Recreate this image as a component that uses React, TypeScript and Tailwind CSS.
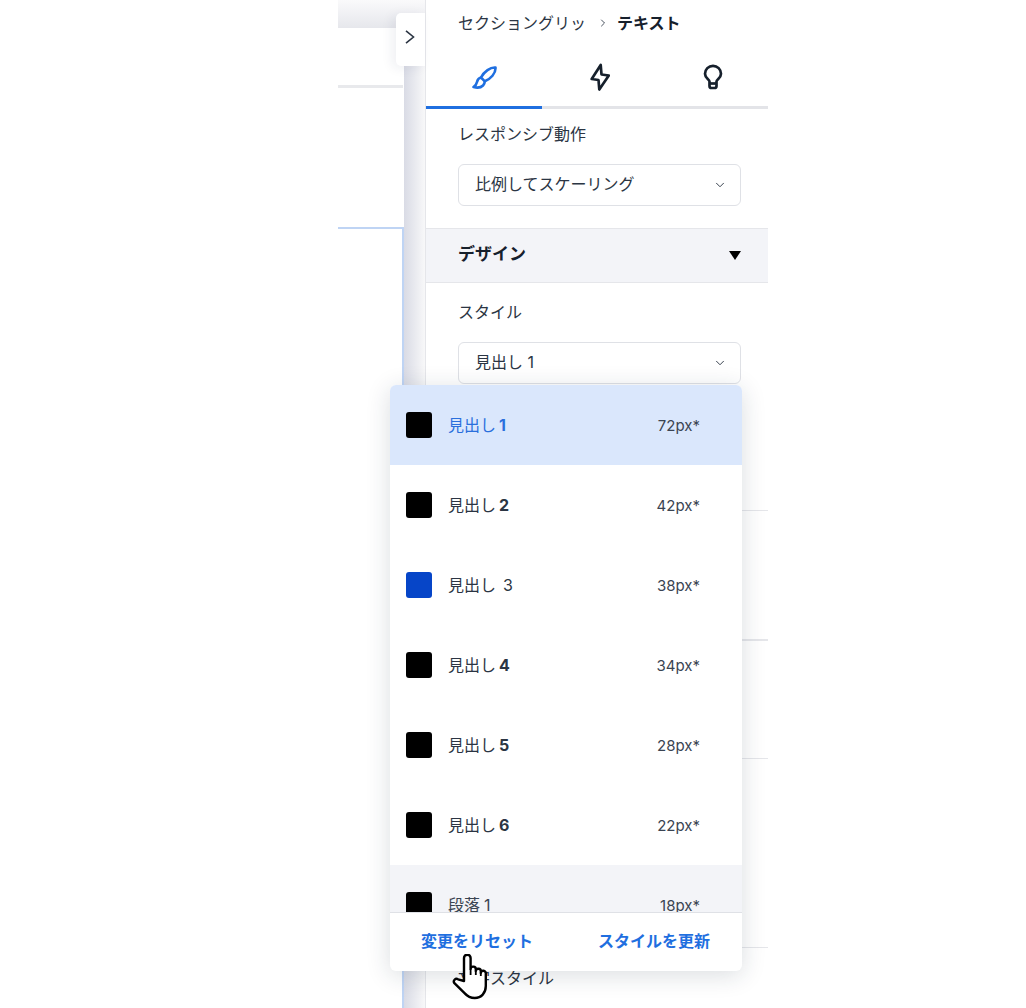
import React from "react";
import { ChevronDown, ChevronRight } from "lucide-react";

const font = "font-['Inter','Noto_Sans_CJK_JP',sans-serif]";

const styles = [
  { name: "見出し", num: "1", size: "72px*", color: "bg-black", active: true, numClass: "ml-[3px] font-bold" },
  { name: "見出し", num: "2", size: "42px*", color: "bg-black", numClass: "ml-[3px] font-bold" },
  { name: "見出し", num: "3", size: "38px*", color: "bg-[#0645c8]", numClass: "ml-[7px]" },
  { name: "見出し", num: "4", size: "34px*", color: "bg-black", numClass: "ml-[3px] font-bold" },
  { name: "見出し", num: "5", size: "28px*", color: "bg-black", numClass: "ml-[3px] font-bold" },
  { name: "見出し", num: "6", size: "22px*", color: "bg-black", numClass: "ml-[3px] font-bold" },
  { name: "段落", num: "1", size: "18px*", color: "bg-black", hover: true, numClass: "ml-[4px]" },
];

const Select = ({ value }: { value: string }) => (
  <div className="flex h-[42px] w-[283px] items-center justify-between rounded-[6px] border border-[#dfe1e6] bg-white pl-[16px] pr-[13px] text-[16px] text-[#2b3543]">
    <span className="pb-[2px]">{value}</span>
    <ChevronDown className="h-[14px] w-[14px] text-[#2b3543]" strokeWidth={1.6} />
  </div>
);

const StyleRow = ({ item }: { item: (typeof styles)[number] }) => (
  <div
    className={`flex h-[80px] shrink-0 items-center pl-[16px] pr-[42px] text-[16px] ${
      item.active ? "bg-[#dae7fc] text-[#2a6fdc]" : item.hover ? "bg-[#f3f4f8] text-[#3a4452]" : "text-[#2b3543]"
    }`}
  >
    <div className={`h-[26px] w-[26px] rounded-[3px] ${item.color}`} />
    <span className="ml-[16px] whitespace-pre">
      {item.name}
      <span className={item.numClass}>{item.num}</span>
    </span>
    <span className="ml-auto pt-[2px] text-[15px] text-[#3a4452]">{item.size}</span>
  </div>
);

const BrushIcon = () => (
  <svg viewBox="0 0 25 25" className="h-[25px] w-[25px]" fill="none" stroke="#1f6fe0" strokeWidth="2.6" strokeLinejoin="round">
    <path d="M23.5 2.500C18.500 2 12 6.500 9 12.500L12.800 16.300C18.500 14 24 8.500 23.500 2.500Z" />
    <path d="M9 12.500C6.500 13 5.500 15 5 17C4.500 19.500 3 21 1.500 22C5 23 9 22.500 11 20.500C12.200 19.200 12.800 17.800 12.800 16.300" />
  </svg>
);

const BoltIcon = () => (
  <svg viewBox="0 0 20 28" className="h-[28px] w-[20px]" fill="none" stroke="#16202c" strokeWidth="2.700" strokeLinejoin="round">
    <path d="M10.700 2L11.500 11.500L18.800 12.500L9.300 26.500L8.500 17L1.700 16Z" />
  </svg>
);

const BulbIcon = () => (
  <svg viewBox="0 0 20 26" className="h-[26px] w-[20px]" fill="none" stroke="#16202c" strokeWidth="2.700" strokeLinejoin="round">
    <path d="M6.500 17.500C6.500 15.500 2 14.500 2 9.800A8 8 0 0 1 18 9.800C18 14.500 13.500 15.500 13.500 17.500V22A2 2 0 0 1 11.500 24H8.500A2 2 0 0 1 6.500 22Z" />
    <path d="M6.500 19.500H13.500" />
  </svg>
);

const HandCursor = () => (
  <svg viewBox="0 0 36 46" className="absolute left-[452px] top-[954px] h-[46px] w-[36px]">
    <path
      d="M12 27V4a3.200 3.200 0 0 1 6.600 0V15a2.600 2.600 0 0 1 5.200 .5V17a2.500 2.500 0 0 1 5 .5V19a2.400 2.400 0 0 1 5 .5V32c0 7-4.500 12-11 12-5 0-7.500-1.700-10-4.600L2.400 29.200a2.700 2.700 0 0 1 3.600-3.900Z"
      fill="#fff"
      stroke="#000"
      strokeWidth="2.400"
      strokeLinejoin="round"
    />
    <path d="M18.600 15V21M23.800 17V21M28.800 19V22" stroke="#000" strokeWidth="1.800" fill="none" />
  </svg>
);

export default function App() {
  return (
    <div className={`relative flex h-[1008px] w-[1026px] overflow-hidden bg-white ${font}`}>
      <div className="w-[338px] shrink-0" />

      {/* canvas edge */}
      <div className="flex w-[66px] shrink-0 flex-col">
        <div className="h-[28px] bg-gradient-to-b from-[#fafafb] to-[#e6e7ec]" />
        <div className="h-[57px]" />
        <div className="mr-[1px] h-[3px] bg-[#e8e9ec]" />
        <div className="h-[139px]" />
        <div className="flex-1 border-t-2 border-r-2 border-[#bfd4f4]" />
      </div>
      <div className="flex w-[21px] shrink-0 flex-col">
        <div className="h-[28px] bg-gradient-to-b from-[#fafafb] to-[#e6e7ec]" />
        <div className="flex-1 bg-gradient-to-r from-[#d9dbe5] to-[#f8f8f9]" />
      </div>

      {/* side panel */}
      <div className="flex h-full w-[343px] shrink-0 flex-col border-l border-[#e5e6ea] bg-white text-[#2b3543]">
        <div className="flex h-[46px] items-center pl-[32px] text-[16px]">
          <span className="w-[128px] whitespace-nowrap">セクショングリッ</span>
          <ChevronRight className="ml-[11px] h-[12px] w-[12px]" strokeWidth={1.7} />
          <span className="ml-[8px] font-bold text-[#16202c]">テキスト</span>
        </div>
        <div className="flex h-[63px] border-b-[3px] border-[#e3e4e8]">
          <div className="-mb-[3px] flex w-[116px] items-center justify-center border-b-[3px] border-[#1f6fe0] pt-[2px]">
            <BrushIcon />
          </div>
          <div className="flex w-[116px] items-center justify-center pt-[2px]">
            <BoltIcon />
          </div>
          <div className="flex w-[110px] items-center justify-center pt-[2px]">
            <BulbIcon />
          </div>
        </div>
        <div className="pl-[32px] pt-[14px]">
          <div className="h-[41px] text-[16px] leading-[22px]">レスポンシブ動作</div>
          <Select value="比例してスケーリング" />
        </div>
        <div className="mt-[22px] flex h-[55px] items-center justify-between border-y border-[#e5e6ea] bg-[#f3f4f8] pl-[32px] pr-[27px] text-[17px] font-bold text-[#16202c]">
          <span className="pb-[2px]">デザイン</span>
          <span className="h-0 w-0 border-x-[6px] border-t-[9px] border-x-transparent border-t-black" />
        </div>
        <div className="pl-[32px] pt-[18px]">
          <div className="h-[41px] text-[16px] leading-[22px]">スタイル</div>
          <Select value="見出し 1" />
        </div>
        <div className="mt-[126px] border-t border-[#e5e6ea]" />
        <div className="mt-[128px] border-t-2 border-[#e5e6ea]" />
        <div className="mt-[117px] border-t border-[#e5e6ea]" />
        <div className="mt-[188px] border-t border-[#e5e6ea] pl-[32px] pt-[19px] text-[16px] leading-[22px]">文字スタイル</div>
      </div>

      {/* style dropdown */}
      <div className="absolute left-[390px] top-[385px] flex h-[586px] w-[352px] flex-col overflow-hidden rounded-[6px] bg-white shadow-[0_4px_24px_rgba(22,45,61,0.16)]">
        <div className="flex h-[527px] flex-col overflow-hidden">
          {styles.map((item) => (
            <StyleRow key={item.name + item.num} item={item} />
          ))}
        </div>
        <div className="flex flex-1 items-center justify-between border-t border-[#dfe1e6] pb-[2px] pl-[31px] pr-[32px] text-[16px] font-bold text-[#1f6fe0]">
          <span>変更をリセット</span>
          <span>スタイルを更新</span>
        </div>
      </div>

      {/* collapse toggle */}
      <div className="absolute left-[396px] top-[13px] flex h-[53px] w-[29px] items-center justify-center rounded-l-[5px] bg-white pb-[5px] pr-[1px] shadow-[-4px_2px_12px_rgba(30,40,80,0.07)]">
        <svg viewBox="0 0 10 14" className="h-[14px] w-[10px]" fill="none" stroke="#2b3543" strokeWidth="1.600">
          <path d="M1 .8L8.500 7L1 13.200" />
        </svg>
      </div>

      <HandCursor />
    </div>
  );
}
